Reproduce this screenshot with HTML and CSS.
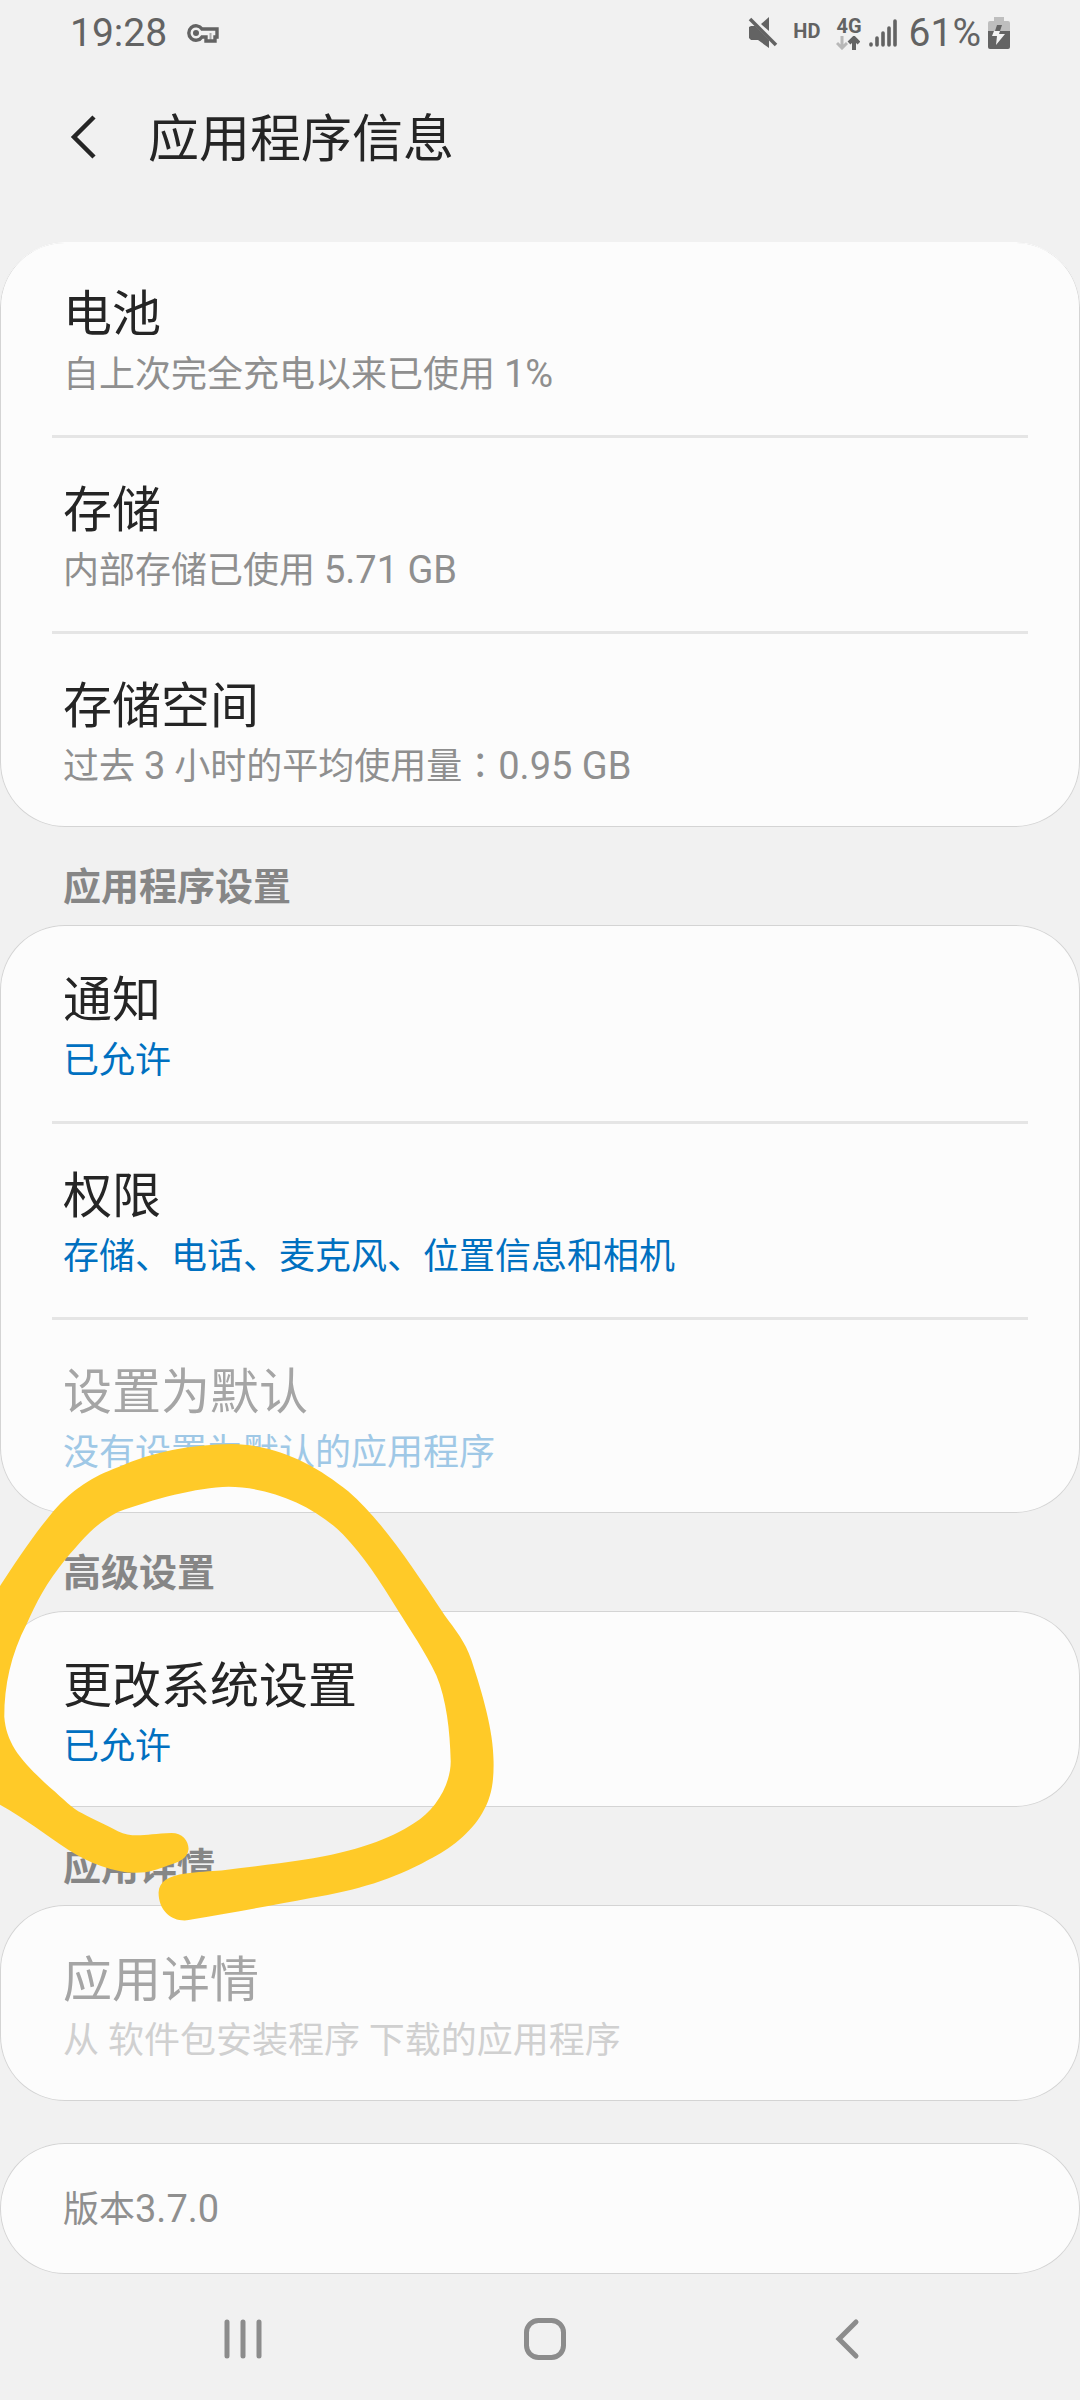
FILE: index.html
```html
<!DOCTYPE html>
<html lang="zh-CN">
<head>
<meta charset="utf-8">
<meta name="viewport" content="width=device-width, initial-scale=1">
<title>应用程序信息</title>
<link rel="stylesheet" href="styles.css">
</head>
<body>
<div class="status">
  <span class="status-text">19:28</span>
  <svg class="key" width="32" height="20" viewBox="0 0 32 20" fill="none" stroke="currentColor" stroke-width="3.400" aria-hidden="true">
    <path d="M15 6A7.200 7.200 0 1 0 15 14H19V18H28V14H30V6Z"/><path d="M23.500 10V17" stroke-width="2" opacity=".5"/><circle cx="9" cy="10" r="3" fill="currentColor" stroke="none"/>
  </svg>
  <div class="status-icons">
    <svg class="mute" width="30" height="34" viewBox="0 0 30 34" fill="currentColor" aria-hidden="true">
      <path d="M1 11L3 10H7L21 24V32L10 24H3L1 22Z"/><path d="M13 8L21 1V15Z"/><path d="M2 3L28 29" stroke="currentColor" stroke-width="3.500"/>
    </svg>
    <span class="tag hd">HD</span>
    <div class="net">
      <span class="tag">4G</span>
      <svg width="24" height="14" viewBox="0 0 24 14" fill="none" stroke="currentColor" stroke-width="3" aria-hidden="true">
        <path d="M6 0V11M1 7L6 12L11 7" opacity=".4"/><path d="M18 14V3M13 7L18 2L23 7" stroke-width="4"/>
      </svg>
    </div>
    <svg class="signal" width="28" height="30" viewBox="0 0 28 30" stroke="currentColor" stroke-width="3.600" stroke-linecap="round" aria-hidden="true">
      <path d="M2 26V27M8 20V27M14 15V27M20 10V27M26 3V27"/>
    </svg>
    <span class="status-text">61%</span>
    <svg class="battery" width="22" height="34" viewBox="0 0 22 34" aria-hidden="true">
      <path d="M6 1H16V5H20Q22 5 22 7V15H0V7Q0 5 2 5H6Z" fill="#bebebe"/><path d="M0 15H22V31Q22 33 20 33H2Q0 33 0 31Z" fill="#636363"/>
      <path d="M9 9H14L12 15H7Z" fill="#636363"/><path d="M6 15H12L11 18H17L8 29L9 20H4Z" fill="#f2f2f2"/>
    </svg>
  </div>
</div>

<header class="bar">
  <button class="back" aria-label="返回">
    <svg width="26" height="44" viewBox="0 0 26 44" fill="none" stroke="currentColor" stroke-width="4.500"><path d="M24 2L4 22L24 42"/></svg>
  </button>
  <h1>应用程序信息</h1>
</header>

<main>
  <section class="card card-scrolled">
    <a class="row" href="#"><span class="name">电池</span><span class="desc">自上次完全充电以来已使用 <span class="num">1%</span></span></a>
    <a class="row" href="#"><span class="name">存储</span><span class="desc">内部存储已使用 <span class="num">5.71 GB</span></span></a>
    <a class="row" href="#"><span class="name">存储空间</span><span class="desc">过去 <span class="num">3</span> 小时的平均使用量<span class="colon" lang="zh-TW">：</span><span class="num">0.95 GB</span></span></a>
  </section>

  <h2>应用程序设置</h2>
  <section class="card">
    <a class="row" href="#"><span class="name">通知</span><span class="desc link">已允许</span></a>
    <a class="row" href="#"><span class="name">权限</span><span class="desc link">存储、电话、麦克风、位置信息和相机</span></a>
    <a class="row disabled" href="#" aria-disabled="true"><span class="name">设置为默认</span><span class="desc link">没有设置为默认的应用程序</span></a>
  </section>

  <div class="marked">
    <h2>高级设置</h2>
    <section class="card">
      <a class="row" href="#"><span class="name">更改系统设置</span><span class="desc link">已允许</span></a>
    </section>
    <svg class="scribble" width="560" height="540" viewBox="0 0 1568 1568" preserveAspectRatio="none" fill="#ffca28" aria-hidden="true">
      <path d="M0 540C50 462 88 400 150 322C205 257 260 222 330 195C430 150 530 130 650 128C780 130 885 190 975 265C1070 350 1155 485 1245 625C1275 668 1302 700 1320 755C1350 850 1382 960 1382 1050C1383 1110 1376 1155 1350 1200C1320 1255 1260 1305 1200 1335C1100 1393 1000 1423 870 1446C760 1468 640 1490 540 1508C490 1522 444 1490 444 1430C446 1398 470 1382 520 1375C550 1370 590 1368 620 1366C700 1355 780 1347 850 1335C1000 1310 1090 1275 1160 1228C1215 1195 1262 1120 1262 1050C1260 960 1250 870 1222 800C1190 730 1150 670 1115 612C1060 520 1020 455 960 390C880 305 750 252 640 252C550 254 430 288 330 325C260 362 220 420 185 460C130 530 100 590 75 650C30 740 12 830 12 920C18 1000 60 1050 140 1125C180 1160 200 1185 230 1200C260 1217 300 1236 330 1252C375 1274 410 1259 480 1257C510 1257 528 1278 528 1304C525 1333 500 1342 470 1352C440 1363 420 1373 380 1373C320 1372 250 1346 190 1305C125 1260 70 1215 0 1175L-20 1160V560Z"/>
    </svg>
  </div>

  <h2>应用详情</h2>
  <section class="card">
    <a class="row disabled" href="#" aria-disabled="true"><span class="name">应用详情</span><span class="desc">从 软件包安装程序 下载的应用程序</span></a>
  </section>

  <section class="card version">
    <p class="desc">版本<span class="num">3.7.0</span></p>
  </section>
</main>

<nav class="nav">
  <button aria-label="最近"><svg width="38" height="40" viewBox="0 0 38 40" stroke="currentColor" stroke-width="5" stroke-linecap="round"><path d="M3 3V37M19 3V37M35 3V37"/></svg></button>
  <button aria-label="主屏幕"><svg width="42" height="42" viewBox="0 0 42 42" fill="none" stroke="currentColor" stroke-width="5"><rect x="2.500" y="2.500" width="37" height="37" rx="12"/></svg></button>
  <button aria-label="返回上一页"><svg width="26" height="42" viewBox="0 0 26 42" fill="none" stroke="currentColor" stroke-width="5" stroke-linecap="round"><path d="M22 4L5 21L22 38"/></svg></button>
</nav>
</body>
</html>
```
FILE: styles.css
```css
* { box-sizing: border-box; }

body {
  margin: 0;
  background: #f1f1f1;
  color: #252525;
  font-family: Roboto, "Noto Sans CJK SC", sans-serif;
  overflow-x: hidden;
}

button {
  display: flex;
  align-items: center;
  justify-content: center;
  padding: 0;
  border: 0;
  background: none;
  color: inherit;
}

svg { display: block; flex: none; }

/* status bar */
.status {
  display: flex;
  align-items: center;
  height: 64px;
  padding: 1px 70px 0;
  color: #636363;
}
.status-text { font-size: 39px; line-height: 44px; }
.key { margin-left: 20px; }
.status-icons { display: flex; align-items: center; margin-left: auto; }
.tag { font-size: 20px; line-height: 20px; font-weight: 700; }
.hd { margin: 0 16px 4px 15px; }
.net { display: flex; flex-direction: column; margin-right: 7px; }
.signal { margin-right: 12px; }
.battery { margin-left: 7px; }

/* title bar */
.bar {
  display: flex;
  align-items: center;
  gap: 52px;
  height: 178px;
  padding: 0 70px 32px;
}
h1 {
  margin: 0;
  padding-top: 6px;
  font-size: 51px;
  line-height: 60px;
  font-weight: 400;
}

/* settings list */
h2 {
  height: 98px;
  margin: 0;
  padding: 38px 63px 0;
  color: #868686;
  font-size: 38px;
  line-height: 44px;
  font-weight: 700;
}
.card {
  background: #fcfcfc;
  border-radius: 65px;
  box-shadow: inset 0 0 0 1px #d4d4d4;
}
.row {
  display: flex;
  flex-direction: column;
  height: 196px;
  padding: 47px 63px 0;
  color: inherit;
  text-decoration: none;
}
.row + .row {
  background: linear-gradient(#e5e5e5, #e5e5e5) 52px 0 / calc(100% - 104px) 3px no-repeat;
}
/* the list is scrolled slightly, so the first card starts under the title bar */
.card-scrolled .row:first-child {
  height: 193px;
  padding-top: 44px;
  border-radius: 65px 65px 0 0;
  box-shadow: inset 0 1px 0 #fcfcfc;
}
.name { font-size: 49px; line-height: 58px; }
.desc {
  margin: 0;
  color: #8f8f8f;
  font-size: 36px;
  line-height: 62px;
}
.num { font-size: 38px; line-height: 40px; }
.link { color: #0070c0; }
.colon { font-family: "Noto Sans CJK TC", sans-serif; line-height: 36px; }
.disabled .name { color: #a5a5a5; }
.disabled .desc { color: #d0d0d0; }
.disabled .link { color: #9fc8e6; }
.version { margin-top: 42px; padding: 36px 63px 33px; }

/* hand-drawn highlight over the advanced settings */
.marked { position: relative; }
.scribble {
  position: absolute;
  top: -113px;
  left: 0;
  z-index: 1;
  pointer-events: none;
}

/* navigation bar */
.nav {
  display: grid;
  grid-template-columns: repeat(3, 1fr);
  height: 126px;
  padding: 0 82px 0 92px;
  color: #8c8c8c;
}
.nav button { height: 130px; }
```
